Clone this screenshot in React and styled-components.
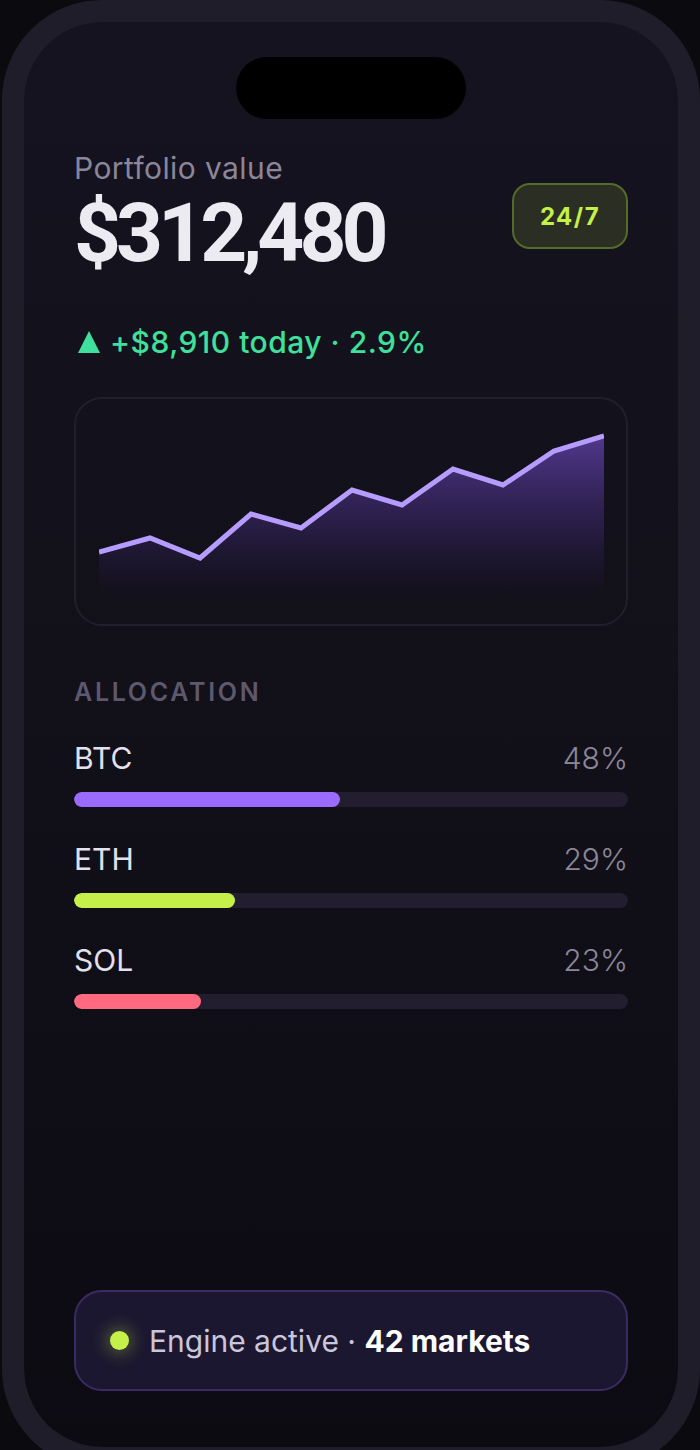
import React from "react";
import styled, { createGlobalStyle } from "styled-components";

const Global = createGlobalStyle`
  html, body { margin: 0; padding: 0; background: #0b0a0f; }
  body { font-family: Inter, "Noto Sans", sans-serif; -webkit-font-smoothing: antialiased; }
  * { box-sizing: border-box; }
`;

const Page = styled.div`
  height: 1450px;
  overflow: hidden;
  padding: 0 0 0 2px;
`;

const Phone = styled.div`
  border: 22px solid #201d2a;
  border-radius: 100px;
  height: 1469px;
  overflow: hidden;
  background: #201d2a;
`;

const Screen = styled.div`
  height: 100%;
  display: flex;
  flex-direction: column;
  padding: 35px 50px 56px;
  border-radius: 78px;
  background: linear-gradient(180deg, #151320 0%, #121019 45%, #0c0b12 100%);
`;

const Notch = styled.div`
  align-self: center;
  width: 230px;
  height: 62px;
  border-radius: 31px;
  background: #000;
  flex-shrink: 0;
`;

const Header = styled.div`
  margin-top: 32px;
  display: flex;
  justify-content: space-between;
  align-items: flex-start;
`;

const TitleBlock = styled.div`
  display: flex;
  flex-direction: column;
  gap: 8px;
`;

const Label = styled.div`
  font-size: 30px;
  line-height: 34px;
  letter-spacing: 0.4px;
  color: #8b8699;
  font-weight: 400;
`;

const Amount = styled.div`
  font-family: Roboto, Inter, sans-serif;
  font-size: 82px;
  line-height: 80px;
  font-weight: 700;
  color: #ecebf2;
  letter-spacing: -5px;
`;

const Badge = styled.div`
  margin-top: 32px;
  width: 116px;
  height: 66px;
  border-radius: 18px;
  border: 2px solid #566a2a;
  background: #2a2e23;
  color: #c5f04a;
  font-weight: 700;
  font-size: 24px;
  letter-spacing: 1.5px;
  display: flex;
  align-items: center;
  justify-content: center;
`;

const Change = styled.div`
  margin-top: 52px;
  font-size: 30px;
  line-height: 34px;
  font-weight: 500;
  letter-spacing: 0.5px;
  color: #3ee09b;
  display: flex;
  align-items: center;
  gap: 10px;
`;

const Tri = styled.span`
  display: inline-block;
  width: 0;
  height: 0;
  border-left: 11.5px solid transparent;
  border-right: 11.5px solid transparent;
  border-bottom: 22px solid #3ee09b;
  margin-left: 4px;
`;

const ChartCard = styled.div`
  margin-top: 38px;
  border: 2px solid #221f2d;
  border-radius: 28px;
  padding: 21px 22px 24px 23px;
`;

const SectionTitle = styled.div`
  margin-top: 51px;
  font-size: 25px;
  line-height: 30px;
  font-weight: 600;
  letter-spacing: 2.7px;
  color: #5e586e;
`;

const AllocList = styled.div`
  margin-top: 33px;
  display: flex;
  flex-direction: column;
  gap: 34px;
`;

const Row = styled.div`
  display: flex;
  flex-direction: column;
  gap: 16px;
`;

const RowHead = styled.div`
  display: flex;
  justify-content: space-between;
  font-size: 30px;
  line-height: 36px;
`;

const Asset = styled.span`
  color: #e4e1ee;
  font-weight: 400;
`;

const Pct = styled.span`
  color: #8b8699;
  font-weight: 300;
`;

const Track = styled.div`
  height: 15px;
  border-radius: 8px;
  background: #221e30;
  overflow: hidden;
`;

const Fill = styled.div`
  height: 100%;
  border-radius: 8px;
  background: ${(p) => p.$color};
`;

const Status = styled.div`
  margin-top: auto;
  height: 101px;
  border-radius: 28px;
  border: 2px solid #3a2c62;
  background: #1c1730;
  display: flex;
  align-items: center;
  gap: 20px;
  padding-left: 34px;
  font-size: 30px;
  color: #cbc6da;
`;

const Dot = styled.span`
  width: 19px;
  height: 19px;
  border-radius: 50%;
  background: #c5f04a;
  box-shadow: 0 0 16px 4px rgba(197, 240, 74, 0.3);
  flex-shrink: 0;
`;

const Strong = styled.b`
  color: #ffffff;
  font-weight: 700;
`;

const pts = [
  [0, 132], [51, 118], [101, 138], [152, 94], [202, 108], [253, 70],
  [303, 85], [354, 49], [404, 65], [455, 31], [505, 16],
];

function Chart() {
  const line = pts.map((p) => p.join(",")).join(" ");
  const area = `0,180 ${line} 505,180`;
  return (
    <svg width="505" height="180" viewBox="0 0 505 180" style={{ display: "block" }}>
      <defs>
        <linearGradient id="g" x1="0" y1="0" x2="0" y2="1">
          <stop offset="0" stopColor="#7b52d9" stopOpacity="0.6" />
          <stop offset="0.55" stopColor="#5a3aa8" stopOpacity="0.3" />
          <stop offset="1" stopColor="#3a2670" stopOpacity="0" />
        </linearGradient>
      </defs>
      <polygon points={area} fill="url(#g)" />
      <polyline points={line} fill="none" stroke="#b69cff" strokeWidth="5" strokeLinejoin="miter" />
    </svg>
  );
}

const alloc = [
  { name: "BTC", pct: 48, color: "#9b6bff" },
  { name: "ETH", pct: 29, color: "#c5f04a" },
  { name: "SOL", pct: 23, color: "#ff6a80" },
];

export default function App() {
  return (
    <>
      <Global />
      <Page>
        <Phone>
          <Screen>
            <Notch />
            <Header>
              <TitleBlock>
                <Label>Portfolio value</Label>
                <Amount>$312,480</Amount>
              </TitleBlock>
              <Badge>24/7</Badge>
            </Header>
            <Change>
              <Tri />
              <span>+$8,910 today · 2.9%</span>
            </Change>
            <ChartCard>
              <Chart />
            </ChartCard>
            <SectionTitle>ALLOCATION</SectionTitle>
            <AllocList>
              {alloc.map((a) => (
                <Row key={a.name}>
                  <RowHead>
                    <Asset>{a.name}</Asset>
                    <Pct>{a.pct}%</Pct>
                  </RowHead>
                  <Track>
                    <Fill $color={a.color} style={{ width: `${a.pct}%` }} />
                  </Track>
                </Row>
              ))}
            </AllocList>
            <Status>
              <Dot />
              <span>
                Engine active · <Strong>42 markets</Strong>
              </span>
            </Status>
          </Screen>
        </Phone>
      </Page>
    </>
  );
}
